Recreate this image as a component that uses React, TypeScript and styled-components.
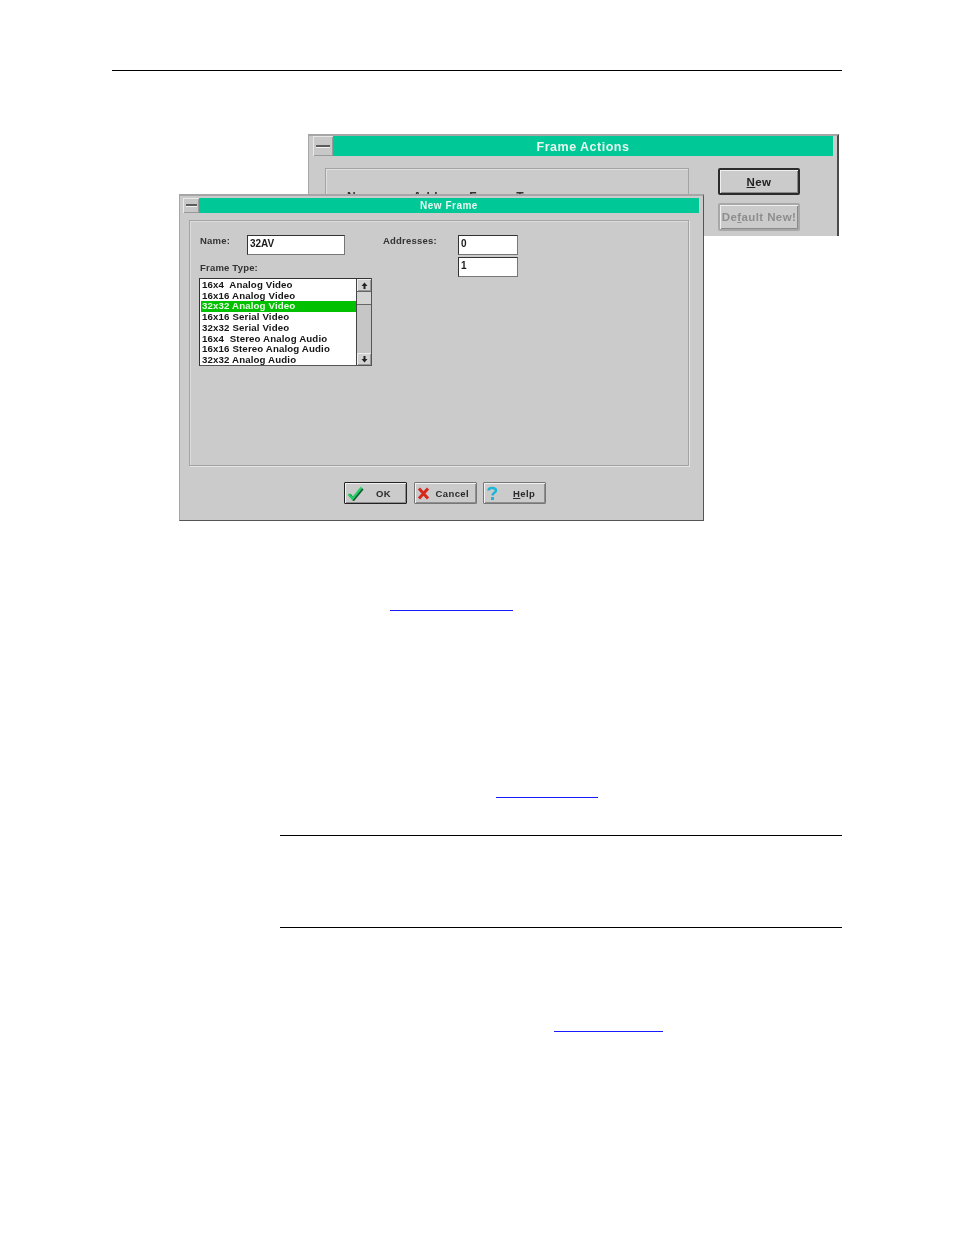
import React from "react";
import styled, { createGlobalStyle } from "styled-components";

const Global = createGlobalStyle`
  html, body { margin: 0; padding: 0; background: #fff; }
  #root { width: 954px; height: 1235px; overflow: hidden; }
`;

const Page = styled.main`
  display: flex;
  flex-direction: column;
  padding: 70px 112px 0;
  width: 730px;
  font-family: "Liberation Sans", Arial, sans-serif;
`;

const HeaderRule = styled.hr`
  margin: 0;
  border: 0;
  height: 1px;
  background: #000;
`;

const Figure = styled.figure`
  position: relative;
  margin: 63px 0 0;
  height: 387px;
`;

const Win = styled.section<{ $back?: boolean }>`
  position: absolute;
  box-sizing: border-box;
  background: #cbcbcb;
  filter: blur(0.45px);
  border-top: 2px solid #a6a6a6;
  border-left: 1px solid #a6a6a6;
  ${(p) =>
    p.$back
      ? `left: 196px; top: 0; width: 531px; height: 102px; overflow: hidden; border-right: 2px solid #4a4a4a; padding: 0 4px 0 0;`
      : `left: 67px; top: 60px; width: 525px; height: 327px; border-right: 1px solid #555; border-bottom: 1px solid #555; padding: 2px 4px 0 3px;`}
`;

const TitleBar = styled.header<{ $back?: boolean }>`
  display: flex;
  align-items: stretch;
  height: ${(p) => (p.$back ? "20px" : "15px")};
  margin-left: ${(p) => (p.$back ? "4px" : "0")};
`;

const SysBox = styled.div<{ $back?: boolean }>`
  box-sizing: border-box;
  width: ${(p) => (p.$back ? "20px" : "16px")};
  background: #c8c8c8;
  display: flex;
  align-items: center;
  justify-content: center;
  box-shadow: inset 1px 1px 0 #e8e8e8, inset -1px -1px 0 #9a9a9a;
  &::after {
    content: "";
    width: ${(p) => (p.$back ? "14px" : "11px")};
    height: 2px;
    background: #5c5c5c;
    border-bottom: 1px solid #f2f2f2;
  }
`;

const Title = styled.h1<{ $back?: boolean }>`
  flex: 1;
  margin: 0;
  background: #00c896;
  color: #e6f7ef;
  font-size: ${(p) => (p.$back ? "12.5px" : "10px")};
  letter-spacing: 0.5px;
  font-weight: 700;
  text-align: center;
  line-height: ${(p) => (p.$back ? "22px" : "15px")};
`;

const BackBody = styled.div`
  display: flex;
  padding: 12px 0 0 16px;
  gap: 29px;
`;

const BackPanel = styled.div`
  box-sizing: border-box;
  width: 364px;
  height: 80px;
  border: 1px solid #a4a4a4;
  box-shadow: inset 1px 1px 0 #e0e0e0;
  padding: 21px 0 0 21px;
  color: #333;
  font-size: 12px;
  font-weight: 700;
  letter-spacing: 0.6px;
  white-space: pre;
`;

const BackButtons = styled.div`
  display: flex;
  flex-direction: column;
  gap: 8px;
`;

const BigButton = styled.div<{ $primary?: boolean; $disabled?: boolean }>`
  box-sizing: border-box;
  width: 82px;
  height: ${(p) => (p.$primary ? "27px" : "28px")};
  flex: none;
  display: flex;
  align-items: center;
  justify-content: center;
  font-size: 11.5px;
  font-weight: 700;
  letter-spacing: 0.4px;
  border-radius: 2px;
  color: ${(p) => (p.$disabled ? "#8d8d8d" : "#222")};
  border: ${(p) => (p.$primary ? "2px solid #2c2c2c" : "2px solid #a8a8a8")};
  box-shadow: inset 1px 1px 0 #f0f0f0, inset -1px -1px 0 #8a8a8a;
`;

const Panel = styled.div`
  box-sizing: border-box;
  display: flex;
  align-items: flex-start;
  width: 500px;
  height: 246px;
  margin: 7px 0 0 6px;
  padding: 14px 0 0 9px;
  border: 1px solid #a4a4a4;
  box-shadow: inset 1px 1px 0 #dcdcdc, 1px 1px 0 #e4e4e4;
`;

const LeftCol = styled.div`
  width: 173px;
  flex: none;
`;

const NameRow = styled.div`
  display: flex;
  align-items: flex-start;
`;

const Label = styled.label<{ $width?: number }>`
  display: block;
  width: ${(p) => (p.$width ? `${p.$width}px` : "auto")};
  flex: none;
  box-sizing: border-box;
  padding-left: 1px;
  color: #333;
  font-size: 9.5px;
  font-weight: 700;
  letter-spacing: 0.2px;
  line-height: 12px;
`;

const TypeLabel = styled(Label)`
  margin: 7px 0 4px;
`;

const Field = styled.div<{ $width: number }>`
  box-sizing: border-box;
  width: ${(p) => p.$width}px;
  height: 20px;
  background: #fff;
  border: 1px solid #333;
  border-right-color: #777;
  border-bottom-color: #777;
  padding: 1px 0 0 2px;
  font-size: 10px;
  font-weight: 700;
  line-height: 13px;
  color: #1a1a1a;
`;

const ListBox = styled.div`
  box-sizing: border-box;
  display: flex;
  width: 173px;
  height: 88px;
  background: #fff;
  border: 1px solid #333;
  border-right-color: #555;
  border-bottom-color: #555;
`;

const Rows = styled.ul`
  flex: 1;
  margin: 0;
  padding: 1px 0 0 1px;
  list-style: none;
  overflow: hidden;
`;

const Row = styled.li<{ $selected?: boolean }>`
  height: 10.72px;
  line-height: 10.7px;
  padding-left: 1px;
  font-size: 9.7px;
  font-weight: 700;
  letter-spacing: 0.13px;
  white-space: pre;
  color: ${(p) => (p.$selected ? "#eafbe6" : "#151515")};
  background: ${(p) => (p.$selected ? "#00c000" : "transparent")};
`;

const ScrollBar = styled.div`
  width: 14px;
  flex: none;
  display: flex;
  flex-direction: column;
  background: #c9c9c9;
  border-left: 1px solid #444;
`;

const ScrollBtn = styled.div`
  height: 12px;
  display: flex;
  align-items: center;
  justify-content: center;
  background: #d2d2d2;
  box-shadow: inset 1px 1px 0 #eee, inset -1px -1px 0 #999;
`;

const Thumb = styled.div`
  box-sizing: border-box;
  height: 14px;
  background: #d4d4d4;
  border-top: 1px solid #666;
  border-bottom: 1px solid #666;
`;

const Track = styled.div`
  flex: 1;
  background: #c6c6c6;
`;

const RightCol = styled.div`
  display: flex;
  align-items: flex-start;
  margin-left: 10px;
`;

const AddressFields = styled.div`
  display: flex;
  flex-direction: column;
  gap: 2px;
`;

const Footer = styled.footer`
  display: flex;
  gap: 6.5px;
  padding: 16px 0 0 161px;
`;

const DlgButton = styled.div<{ $primary?: boolean }>`
  box-sizing: border-box;
  width: 63px;
  height: 22px;
  display: flex;
  align-items: center;
  gap: ${(p) => (p.$primary ? "12px" : "6px")};
  padding-left: 2px;
  font-size: 9.5px;
  font-weight: 700;
  letter-spacing: 0.4px;
  color: #2a2a2a;
  border-radius: 1px;
  border: 1px solid ${(p) => (p.$primary ? "#222" : "#777")};
  box-shadow: inset 1px 1px 0 #f2f2f2, inset -1px -1px 0 #8e8e8e;
`;

const HelpText = styled.span`
  margin-left: 8px;
`;

const LinkLine = styled.div<{ $top: number; $left: number; $width: number }>`
  margin: ${(p) => p.$top}px 0 0 ${(p) => p.$left}px;
  width: ${(p) => p.$width}px;
  height: 1px;
  background: #1a1aff;
`;

const NoteRule = styled.hr<{ $top: number }>`
  margin: ${(p) => p.$top}px 0 0 168px;
  border: 0;
  height: 1px;
  background: #000;
`;

const Arrow = ({ down }: { down?: boolean }) => (
  <svg width="7" height="7" viewBox="0 0 7 7">
    <path
      d={down ? "M2.5 0h2v3H6.5L3.5 6.5.5 3H2.5z" : "M3.5.5 6.5 4H4.5v3h-2V4H.5z"}
      fill="#222"
    />
  </svg>
);

const CheckIcon = () => (
  <svg width="17" height="15" viewBox="0 0 17 15">
    <path d="M2 8 6 13 15 2" fill="none" stroke="#14603c" strokeWidth="2.6" transform="translate(0.6 0.6)" />
    <path d="M1.5 8 5.5 12.5 14.5 1.5" fill="none" stroke="#22d060" strokeWidth="2.2" />
  </svg>
);

const CrossIcon = () => (
  <svg width="13" height="13" viewBox="0 0 13 13">
    <path d="M2 1.5 11 11.5M11 1.5 2 11.5" fill="none" stroke="#d8281c" strokeWidth="3" />
  </svg>
);

const HelpIcon = () => (
  <svg width="13" height="15" viewBox="0 0 13 15">
    <path d="M2.5 4.5C2.5 1.5 10 1 10 4.5 10 7 6.5 6.5 6.5 9.5" fill="none" stroke="#1cb6d8" strokeWidth="2.6" />
    <rect x="5" y="11" width="3" height="3" fill="#1cb6d8" />
  </svg>
);

const rows = [
  "16x4  Analog Video",
  "16x16 Analog Video",
  "32x32 Analog Video",
  "16x16 Serial Video",
  "32x32 Serial Video",
  "16x4  Stereo Analog Audio",
  "16x16 Stereo Analog Audio",
  "32x32 Analog Audio",
];

export default function App() {
  return (
    <Page>
      <Global />
      <HeaderRule />
      <Figure>
        <Win $back>
          <TitleBar $back>
            <SysBox $back />
            <Title $back>Frame Actions</Title>
          </TitleBar>
          <BackBody>
            <BackPanel>{"Name        Address Frame  Type"}</BackPanel>
            <BackButtons>
              <BigButton $primary>
                <span>
                  <u>N</u>ew
                </span>
              </BigButton>
              <BigButton $disabled>
                <span>
                  De<u>f</u>ault New!
                </span>
              </BigButton>
              <BigButton />
            </BackButtons>
          </BackBody>
        </Win>
        <Win>
          <TitleBar>
            <SysBox />
            <Title>New Frame</Title>
          </TitleBar>
          <Panel>
            <LeftCol>
              <NameRow>
                <Label $width={48}>Name:</Label>
                <Field $width={98}>32AV</Field>
              </NameRow>
              <TypeLabel>Frame Type:</TypeLabel>
              <ListBox>
                <Rows>
                  {rows.map((r, i) => (
                    <Row key={r} $selected={i === 2}>
                      {r}
                    </Row>
                  ))}
                </Rows>
                <ScrollBar>
                  <ScrollBtn>
                    <Arrow />
                  </ScrollBtn>
                  <Thumb />
                  <Track />
                  <ScrollBtn>
                    <Arrow down />
                  </ScrollBtn>
                </ScrollBar>
              </ListBox>
            </LeftCol>
            <RightCol>
              <Label $width={76}>Addresses:</Label>
              <AddressFields>
                <Field $width={60}>0</Field>
                <Field $width={60}>1</Field>
              </AddressFields>
            </RightCol>
          </Panel>
          <Footer>
            <DlgButton $primary>
              <CheckIcon />
              <span>OK</span>
            </DlgButton>
            <DlgButton>
              <CrossIcon />
              <span>Cancel</span>
            </DlgButton>
            <DlgButton>
              <HelpIcon />
              <HelpText>
                <u>H</u>elp
              </HelpText>
            </DlgButton>
          </Footer>
        </Win>
      </Figure>
      <LinkLine $top={89} $left={278} $width={123} />
      <LinkLine $top={186} $left={384} $width={102} />
      <NoteRule $top={37} />
      <NoteRule $top={91} />
      <LinkLine $top={103} $left={442} $width={109} />
    </Page>
  );
}
